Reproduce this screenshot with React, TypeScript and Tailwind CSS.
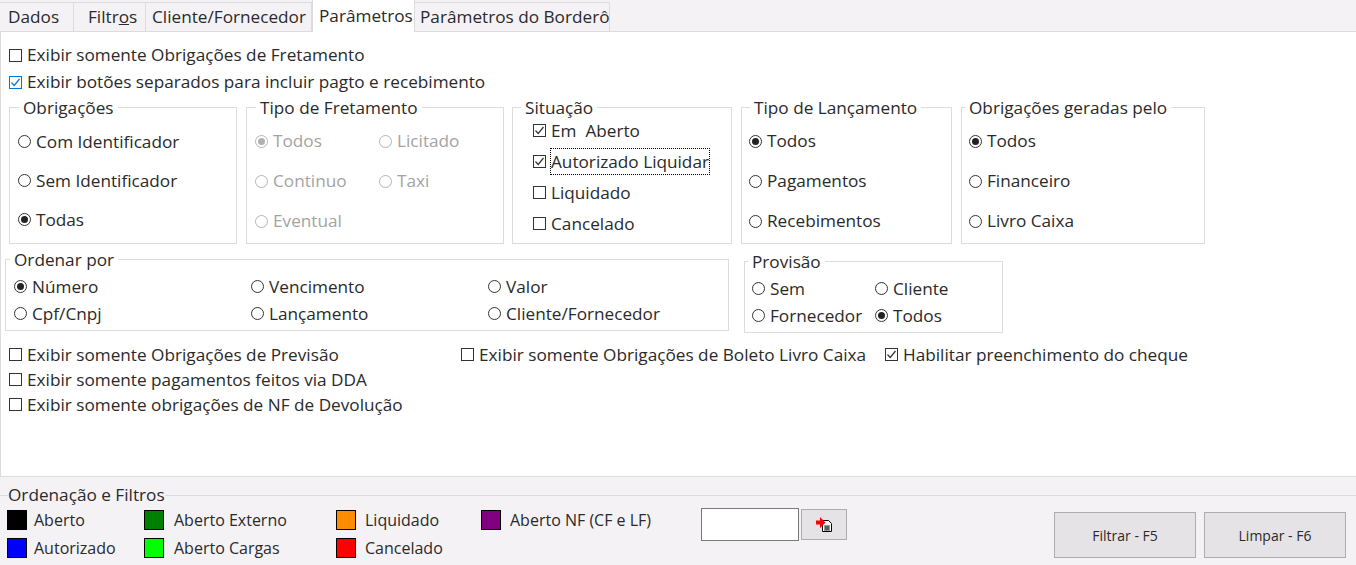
import type { ReactNode } from 'react';

const font = { fontFamily: '"Open Sans", "Noto Sans", sans-serif' };

const Check = ({ label, checked, blue, focus, className }: { label: string; checked?: boolean; blue?: boolean; focus?: boolean; className?: string }) => (
  <label className={`flex items-center ${className ?? ''}`}>
    <span className={`w-[13px] h-[13px] shrink-0 border bg-white flex items-center justify-center ${blue ? 'border-[#0078d7]' : 'border-[#333333]'}`}>
      {checked && (
        <svg width="11" height="11" viewBox="0 0 11 11" fill="none" stroke={blue ? '#0078d7' : '#333333'} strokeWidth="1.2">
          <path d="M1.5 5.5 L4.2 8.5 L9.5 2" />
        </svg>
      )}
    </span>
    <span className={`ml-[5px] whitespace-pre ${focus ? 'outline-1 outline-dotted outline-black' : ''}`}>{label}</span>
  </label>
);

const Radio = ({ label, checked, disabled, className }: { label: string; checked?: boolean; disabled?: boolean; className?: string }) => (
  <label className={`flex items-center ${disabled ? 'text-[#a3a3a3]' : ''} ${className ?? ''}`}>
    <span className={`w-[13px] h-[13px] shrink-0 rounded-full border bg-white flex items-center justify-center ${disabled ? 'border-[#b5b5b5]' : 'border-[#333333]'}`}>
      {checked && <span className={`w-[7px] h-[7px] rounded-full ${disabled ? 'bg-[#b0b0b0]' : 'bg-[#222222]'}`} />}
    </span>
    <span className="ml-[5px] whitespace-nowrap">{label}</span>
  </label>
);

const Group = ({ title, className, legendClass, children }: { title: string; className?: string; legendClass?: string; children: ReactNode }) => (
  <fieldset className={`border border-[#dcdcdc] ${className ?? ''}`}>
    <legend className={`px-1 pt-[2px] leading-[20px] whitespace-nowrap ${legendClass ?? 'ml-2'}`}>{title}</legend>
    {children}
  </fieldset>
);

const Swatch = ({ color, label, gap, className }: { color: string; label: string; gap: string; className?: string }) => (
  <div className={`flex items-center h-5 ${className ?? ''}`}>
    <span className={`w-5 h-5 border border-black ${color}`} />
    <span className={`${gap} whitespace-nowrap`}>{label}</span>
  </div>
);

const tabs = [
  { id: 'dados', w: 'w-[74px]', label: <span className="pl-2">Dados</span> },
  { id: 'filtros', w: 'w-[72px]', label: <span className="pl-[14px]">Filtr<u>o</u>s</span> },
  { id: 'cliente', w: 'w-[166px]', label: <span className="pl-[6px]">Cliente/Fornecedor</span> },
];

export default function App() {
  return (
    <div className="w-[1356px] h-[565px] overflow-hidden bg-[#f5f2f6] text-[#2a2a2a] text-[17.2px] flex flex-col" style={font}>
      {/* abas */}
      <div className="h-[31px] flex shrink-0">
        {tabs.map(t => (
          <div key={t.id} className={`${t.w} h-[29px] mt-[2px] border-r border-t border-[#dcdcdc] flex items-center whitespace-nowrap`}>{t.label}</div>
        ))}
        <div className="w-[103px] h-[32px] bg-white border-x border-[#dcdcdc] z-10 pl-[6px] leading-[31px]">Parâmetros</div>
        <div className="w-[195px] h-[29px] mt-[2px] border-r border-t border-[#dcdcdc] flex items-center pl-[5px] whitespace-nowrap">Parâmetros do Borderô</div>
      </div>

      {/* conteudo */}
      <div className="h-[446px] shrink-0 bg-white border-y border-[#dcdcdc] border-l pt-[10px]">
        <Check label="Exibir somente Obrigações de Fretamento" className="ml-[8px] h-[26px]" />
        <Check label="Exibir botões separados para incluir pagto e recebimento" checked blue className="ml-[8px] h-[28px]" />

        <div className="flex ml-[8px] gap-[9px]">
          <Group title="Obrigações" legendClass="ml-[9px]" className="w-[228px] h-[148px]">
            <div className="grid grid-rows-3 h-[121px] pl-[8px] pt-[4px]">
              <Radio label="Com Identificador" />
              <Radio label="Sem Identificador" />
              <Radio label="Todas" checked />
            </div>
          </Group>
          <Group title="Tipo de Fretamento" legendClass="ml-[9px]" className="w-[258px] h-[148px]">
            <div className="grid grid-cols-[124px_1fr] grid-rows-3 h-[123px] pl-[8px] pt-[3px]">
              <Radio label="Todos" checked disabled />
              <Radio label="Licitado" disabled />
              <Radio label="Continuo" disabled />
              <Radio label="Taxi" disabled />
              <Radio label="Eventual" disabled />
            </div>
          </Group>
          <Group title="Situação" className="w-[220px] h-[148px] -ml-px">
            <div className="grid grid-rows-4 h-[124px] pl-[20px] -mt-[3px]">
              <Check label="Em  Aberto" checked />
              <Check label="Autorizado Liquidar" checked focus />
              <Check label="Liquidado" />
              <Check label="Cancelado" />
            </div>
          </Group>
          <Group title="Tipo de Lançamento" className="w-[211px] h-[148px]">
            <div className="grid grid-rows-3 h-[123px] pl-[7px] pt-[3px]">
              <Radio label="Todos" checked />
              <Radio label="Pagamentos" />
              <Radio label="Recebimentos" />
            </div>
          </Group>
          <Group title="Obrigações geradas pelo" legendClass="ml-[3px]" className="w-[244px] h-[148px]">
            <div className="grid grid-rows-3 h-[123px] pl-[7px] pt-[3px]">
              <Radio label="Todos" checked />
              <Radio label="Financeiro" />
              <Radio label="Livro Caixa" />
            </div>
          </Group>
        </div>

        <div className="flex items-start mt-[4px] ml-[4px]">
          <Group title="Ordenar por" legendClass="ml-[4px]" className="w-[724px] h-[83px]">
            <div className="grid grid-cols-[237px_237px_1fr] grid-rows-2 h-[57px] pl-[8px] pt-[3px]">
              <Radio label="Número" checked />
              <Radio label="Vencimento" />
              <Radio label="Valor" />
              <Radio label="Cpf/Cnpj" />
              <Radio label="Lançamento" />
              <Radio label="Cliente/Fornecedor" />
            </div>
          </Group>
          <Group title="Provisão" legendClass="ml-[3px]" className="w-[259px] h-[83px] ml-[15px] mt-[2px]">
            <div className="grid grid-cols-[123px_1fr] grid-rows-2 h-[57px] pl-[7px] pt-[3px]">
              <Radio label="Sem" />
              <Radio label="Cliente" />
              <Radio label="Fornecedor" />
              <Radio label="Todos" checked />
            </div>
          </Group>
        </div>

        <div className="flex ml-[8px] mt-[9px]">
          <div className="w-[452px]">
            <Check label="Exibir somente Obrigações de Previsão" className="h-[25px]" />
            <Check label="Exibir somente pagamentos feitos via DDA" className="h-[25px]" />
            <Check label="Exibir somente obrigações de NF de Devolução" className="h-[25px]" />
          </div>
          <Check label="Exibir somente Obrigações de Boleto Livro Caixa" className="h-[25px] w-[424px]" />
          <Check label="Habilitar preenchimento do cheque" checked className="h-[25px]" />
        </div>
      </div>

      {/* ordenacao e filtros */}
      <div className="flex-1 pt-[8px]">
        <fieldset className="border-t border-[#dcdcdc] h-[79px]">
          <legend className="ml-[8px] leading-[20px] whitespace-nowrap">Ordenação e Filtros</legend>
          <div className="flex items-start pl-[7px] text-[16px]">
            <div className="w-[137px] flex flex-col gap-[8px] mt-[5px]">
              <Swatch color="bg-black" label="Aberto" gap="ml-[7px]" />
              <Swatch color="bg-[#0000ff]" label="Autorizado" gap="ml-[7px]" />
            </div>
            <div className="w-[192px] flex flex-col gap-[8px] mt-[5px]">
              <Swatch color="bg-[#008000]" label="Aberto Externo" gap="ml-[10px]" />
              <Swatch color="bg-[#00ff00]" label="Aberto Cargas" gap="ml-[10px]" />
            </div>
            <div className="w-[145px] flex flex-col gap-[8px] mt-[5px]">
              <Swatch color="bg-[#ff8c00]" label="Liquidado" gap="ml-[9px]" />
              <Swatch color="bg-[#ff0000]" label="Cancelado" gap="ml-[9px]" />
            </div>
            <Swatch color="bg-[#800080]" label="Aberto NF (CF e LF)" gap="ml-[9px]" className="w-[220px] mt-[5px]" />
            <div className="w-[98px] h-[33px] mt-[3px] bg-white border border-[#7a7a7a]" />
            <button className="w-[46px] h-[31px] mt-[4px] ml-[2px] bg-[#e6e3e6] border border-[#adadad] flex items-center justify-center">
              <svg width="16" height="15" viewBox="0 0 16 15">
                <path d="M6.5 3.5h6l3 3v8h-9z" fill="#fff" stroke="#000" />
                <path d="M8 9h6M8 11h6M8 13h6M10 9v4M12 9v4" stroke="#000" strokeWidth="0.8" />
                <path d="M0 3.5h4V0l5.5 5.5L4 11V7.5H0z" fill="#f00" />
              </svg>
            </button>
            <button className="w-[142px] h-[46px] mt-[7px] ml-[207px] bg-[#e6e3e6] border border-[#adadad] text-[14px]">Filtrar - F5</button>
            <button className="w-[142px] h-[46px] mt-[7px] ml-[8px] bg-[#e6e3e6] border border-[#adadad] text-[14px]">Limpar - F6</button>
          </div>
        </fieldset>
      </div>
    </div>
  );
}
